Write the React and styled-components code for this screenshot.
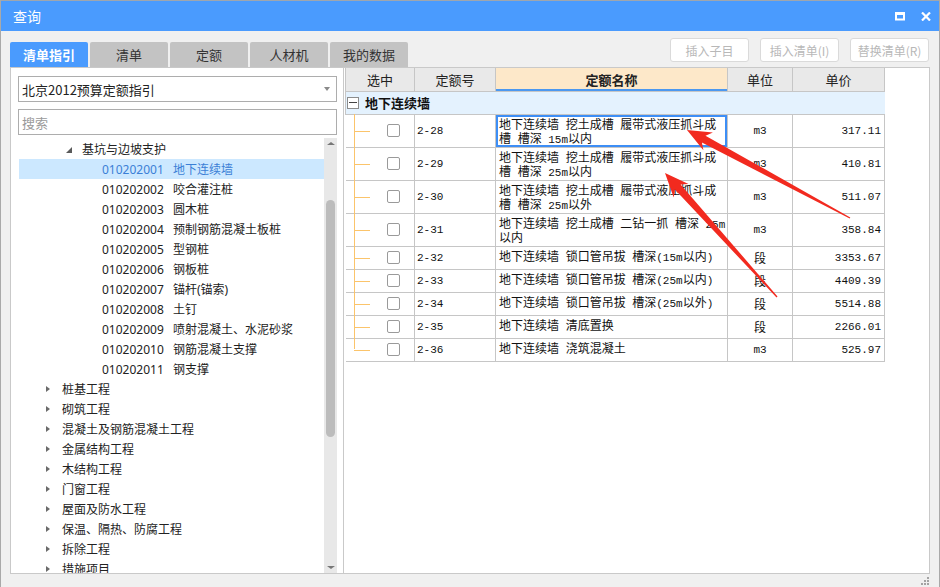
import React from "react";
import styled, { createGlobalStyle } from "styled-components";

const GlobalStyle = createGlobalStyle`
  html, body {
    margin: 0;
    padding: 0;
    background: #f0f0f0;
  }
  body {
    font-family: "Noto Sans", "Noto Sans CJK SC", sans-serif;
    font-size: 12px;
    color: #222;
  }
  * {
    box-sizing: border-box;
  }
`;

const Window = styled.div`
  position: relative;
  width: 940px;
  height: 587px;
  display: flex;
  flex-direction: column;
  background: #f0f0f0;
  border-left: 1px solid #a9a9a9;
  border-right: 1px solid #a9a9a9;
  overflow: hidden;
`;

const TitleBar = styled.div`
  height: 32px;
  display: flex;
  align-items: center;
  justify-content: space-between;
  background: #4a9bfe;
  border-top: 1px solid #9fa6ae;
  padding: 0 8px 0 12px;
`;

const Title = styled.div`
  color: #fff;
  font-size: 14px;
  font-family: "Noto Sans CJK SC", sans-serif;
`;

const WinButtons = styled.div`
  display: flex;
  align-items: center;
  gap: 16px;
  padding-top: 1px;
`;

const Body = styled.div`
  flex: 1;
  display: flex;
  flex-direction: column;
  padding: 0 9px 0 9px;
`;

const Toolbar = styled.div`
  height: 36px;
  display: flex;
  justify-content: space-between;
`;

const Tabs = styled.div`
  display: flex;
  align-items: flex-end;
  gap: 2px;
`;

const Tab = styled.div`
  width: 78px;
  height: 25px;
  display: flex;
  align-items: center;
  justify-content: center;
  border-radius: 2px 2px 0 0;
  font-family: "Noto Sans CJK SC", sans-serif;
  font-size: 13px;
  font-weight: ${(p) => (p.$active ? 700 : 400)};
  background: ${(p) => (p.$active ? "#4a9bfe" : "#c3c3c3")};
  color: ${(p) => (p.$active ? "#fff" : "#333")};
`;

const Actions = styled.div`
  display: flex;
  gap: 11px;
  padding-top: 7px;
  padding-right: 1px;
`;

const ActionButton = styled.div`
  width: 79px;
  height: 24px;
  display: flex;
  align-items: center;
  justify-content: center;
  background: #fff;
  border: 1px solid #dadada;
  border-radius: 3px;
  color: #b8b8b8;
  font-family: "Noto Sans CJK SC", sans-serif;
  font-size: 12px;
`;

const Panes = styled.div`
  height: 507px;
  display: flex;
`;

const LeftPane = styled.div`
  width: 334px;
  display: flex;
  flex-direction: column;
  background: #fff;
  border: 1px solid #c9c9c9;
  padding: 8px 6px 0 7px;
`;

const Field = styled.div`
  height: 26px;
  display: flex;
  align-items: center;
  justify-content: space-between;
  border: 1px solid #adadad;
  padding: 0 6px 0 3px;
  font-family: "Noto Sans CJK SC", sans-serif;
  font-size: 13px;
  color: ${(p) => (p.$placeholder ? "#9a9a9a" : "#222")};
  margin-top: ${(p) => (p.$gap ? "7px" : "0")};
`;

const Caret = styled.span`
  width: 0;
  height: 0;
  border-left: 3.5px solid transparent;
  border-right: 3.5px solid transparent;
  border-top: 4px solid #8a8a8a;
`;

const TreeArea = styled.div`
  flex: 1;
  display: flex;
  margin-top: 3px;
  margin-left: 1px;
  min-height: 0;
`;

const TreeList = styled.div`
  flex: 1;
  overflow: hidden;
  padding-top: 1px;
`;

const TreeRow = styled.div`
  height: 20px;
  display: flex;
  align-items: center;
  padding-left: ${(p) => p.$indent}px;
  background: ${(p) => (p.$selected ? "#cce8ff" : "transparent")};
  color: ${(p) => (p.$selected ? "#3b7fd6" : "#222")};
  font-size: 12px;
  white-space: nowrap;
`;

const Toggle = styled.span`
  width: 16px;
  display: flex;
  align-items: center;
`;

const Expanded = styled.span`
  width: 0;
  height: 0;
  border-left: 6px solid transparent;
  border-bottom: 6px solid #5a5a5a;
  margin-top: 1px;
`;

const Collapsed = styled.span`
  width: 0;
  height: 0;
  border-top: 3.5px solid transparent;
  border-bottom: 3.5px solid transparent;
  border-left: 4px solid #6a6a6a;
`;

const Code = styled.span`
  display: inline-block;
  width: 71px;
`;

const ScrollBar = styled.div`
  width: 13px;
  display: flex;
  flex-direction: column;
  align-items: center;
  background: #e8e8e8;
  padding: 2px 0;
`;

const ScrollArrow = styled.span`
  width: 0;
  height: 0;
  border-left: 4px solid transparent;
  border-right: 4px solid transparent;
  ${(p) =>
    p.$down
      ? "border-top: 3px solid #777; margin-top: auto; margin-bottom: 2px;"
      : "border-bottom: 3px solid #777; margin-top: 2px;"}
`;

const Thumb = styled.div`
  width: 9px;
  height: 237px;
  margin-top: 55px;
  border-radius: 5px;
  background: #bcbcbc;
`;

const RightPane = styled.div`
  flex: 1;
  background: #fff;
  border: 1px solid #c9c9c9;
  border-left: none;
  padding-left: 1px;
`;

const Table = styled.table`
  width: 539px;
  border-collapse: collapse;
  table-layout: fixed;
  font-family: "Liberation Mono", "Noto Sans CJK SC", monospace;
  font-size: 12px;
  color: #111;
`;

const Th = styled.th`
  height: 23px;
  padding: 0;
  border: 1px solid #c6c6c6;
  border-top: none;
  font-family: "Noto Sans CJK SC", sans-serif;
  font-size: 13px;
  font-weight: ${(p) => (p.$active ? 700 : 400)};
  color: #222;
  background: ${(p) => (p.$active ? "#fde8c9" : "#e9e9e9")};
  box-shadow: ${(p) => (p.$active ? "inset 0 -2px 0 #4b98f0" : "none")};
`;

const GroupCell = styled.td`
  height: 23px;
  padding: 0 0 0 1px;
  background: #e4f2fe;
  border: 1px solid #c6c6c6;
  border-right: none;
`;

const GroupLabel = styled.div`
  display: flex;
  align-items: center;
  gap: 6px;
  font-family: "Noto Sans CJK SC", sans-serif;
  font-size: 13px;
  font-weight: 700;
`;

const MinusBox = styled.span`
  width: 12px;
  height: 12px;
  border: 1px solid #8c8c8c;
  background: #fff;
  display: flex;
  align-items: center;
  justify-content: center;
  &::before {
    content: "";
    width: 8px;
    height: 1px;
    background: #444;
  }
`;

const Tr = styled.tr`
  height: ${(p) => (p.$tall ? 33 : 23)}px;
`;

const Td = styled.td`
  padding: 0 ${(p) => (p.$align === "right" ? "3px" : "2px")} 0 2px;
  border: 1px solid #c6c6c6;
  text-align: ${(p) => p.$align || "left"};
  vertical-align: middle;
  white-space: nowrap;
  font-size: ${(p) => (p.$cjk ? "12px" : "11px")};
`;

const SelectCell = styled.td`
  position: relative;
  padding: 0 0 0 41px;
  border: 1px solid #c6c6c6;
  border-left: none;

  &::before {
    content: "";
    position: absolute;
    left: 8px;
    top: -1px;
    width: 1px;
    height: ${(p) => (p.$last ? "50%" : "calc(100% + 1px)")};
    background: #fbc46b;
  }
  &::after {
    content: "";
    position: absolute;
    left: 8px;
    top: 50%;
    width: 16px;
    height: 1px;
    background: #fbc46b;
  }
`;

const CheckBox = styled.span`
  display: block;
  width: 13px;
  height: 13px;
  border: 1px solid #9a9a9a;
  border-radius: 2px;
  background: #fff;
`;

const NameCell = styled.td`
  padding: ${(p) => (p.$tall ? "4px" : "1px")} 0 0 3px;
  border: 1px solid #c6c6c6;
  overflow: hidden;
  line-height: 14px;
  vertical-align: ${(p) => (p.$tall ? "top" : "middle")};
  box-shadow: ${(p) => (p.$selected ? "inset 0 0 0 2px #3d8ef5" : "none")};
`;

const NameLine = styled.div`
  white-space: pre;
`;

const Latin = styled.span`
  font-size: 11px;
`;

const Footer = styled.div`
  flex: 1;
  display: flex;
  justify-content: flex-end;
  align-items: flex-start;
  padding-top: 3px;
`;

const Overlay = styled.svg`
  position: absolute;
  left: 0;
  top: 0;
  pointer-events: none;
`;

const tabs = ["清单指引", "清单", "定额", "人材机", "我的数据"];
const actions = ["插入子目", "插入清单(I)", "替换清单(R)"];

const subItems = [
  ["010202001", "地下连续墙"],
  ["010202002", "咬合灌注桩"],
  ["010202003", "圆木桩"],
  ["010202004", "预制钢筋混凝土板桩"],
  ["010202005", "型钢桩"],
  ["010202006", "钢板桩"],
  ["010202007", "锚杆(锚索)"],
  ["010202008", "土钉"],
  ["010202009", "喷射混凝土、水泥砂浆"],
  ["010202010", "钢筋混凝土支撑"],
  ["010202011", "钢支撑"],
];

const chapters = [
  "桩基工程",
  "砌筑工程",
  "混凝土及钢筋混凝土工程",
  "金属结构工程",
  "木结构工程",
  "门窗工程",
  "屋面及防水工程",
  "保温、隔热、防腐工程",
  "拆除工程",
  "措施项目",
];

const rows = [
  { code: "2-28", name: ["地下连续墙 挖土成槽 履带式液压抓斗成", "槽 槽深 15m以内"], unit: "m3", price: "317.11", selected: true },
  { code: "2-29", name: ["地下连续墙 挖土成槽 履带式液压抓斗成", "槽 槽深 25m以内"], unit: "m3", price: "410.81" },
  { code: "2-30", name: ["地下连续墙 挖土成槽 履带式液压抓斗成", "槽 槽深 25m以外"], unit: "m3", price: "511.07" },
  { code: "2-31", name: ["地下连续墙 挖土成槽 二钻一抓 槽深 25m", "以内"], unit: "m3", price: "358.84" },
  { code: "2-32", name: ["地下连续墙 锁口管吊拔 槽深(15m以内)"], unit: "段", price: "3353.67" },
  { code: "2-33", name: ["地下连续墙 锁口管吊拔 槽深(25m以内)"], unit: "段", price: "4409.39" },
  { code: "2-34", name: ["地下连续墙 锁口管吊拔 槽深(25m以外)"], unit: "段", price: "5514.88" },
  { code: "2-35", name: ["地下连续墙 清底置换"], unit: "段", price: "2266.01" },
  { code: "2-36", name: ["地下连续墙 浇筑混凝土"], unit: "m3", price: "525.97" },
];

// ascii runs are set a bit smaller, like the half-width glyphs of the original
const renderLine = (text) =>
  text.split(/([ -~]+)/).map((part, i) =>
    /^[ -~]+$/.test(part) ? <Latin key={i}>{part}</Latin> : part
  );

// tapered screenshot-style arrow, from tail to tip
const arrowPoints = (x1, y1, x2, y2) => {
  const len = Math.hypot(x2 - x1, y2 - y1);
  const ux = (x2 - x1) / len;
  const uy = (y2 - y1) / len;
  const nx = -uy;
  const ny = ux;
  const neck = [x2 - ux * 19, y2 - uy * 19];
  const wing = [x2 - ux * 24, y2 - uy * 24];
  const pt = (p, w) => `${(p[0] + nx * w).toFixed(1)},${(p[1] + ny * w).toFixed(1)}`;
  return [
    pt([x1, y1], 0.7),
    pt(neck, 3.8),
    pt(wing, 10),
    pt([x2, y2], 0),
    pt(wing, -10),
    pt(neck, -3.8),
    pt([x1, y1], -0.7),
  ].join(" ");
};

const App = () => (
  <>
    <GlobalStyle />
    <Window>
      <TitleBar>
        <Title>查询</Title>
        <WinButtons>
          <svg width="10" height="9" viewBox="0 0 10 9">
            <rect x="1" y="1.5" width="8" height="6" fill="none" stroke="#fff" strokeWidth="2" />
            <rect x="0" y="0" width="10" height="3" fill="#fff" />
          </svg>
          <svg width="10" height="9" viewBox="0 0 10 9">
            <path d="M1 0.5 L9 8.5 M9 0.5 L1 8.5" stroke="#fff" strokeWidth="2.2" />
          </svg>
        </WinButtons>
      </TitleBar>

      <Body>
        <Toolbar>
          <Tabs>
            {tabs.map((t, i) => (
              <Tab key={t} $active={i === 0}>
                {t}
              </Tab>
            ))}
          </Tabs>
          <Actions>
            {actions.map((a) => (
              <ActionButton key={a}>{a}</ActionButton>
            ))}
          </Actions>
        </Toolbar>

        <Panes>
          <LeftPane>
            <Field>
              北京2012预算定额指引
              <Caret />
            </Field>
            <Field $gap $placeholder>
              搜索
            </Field>
            <TreeArea>
              <TreeList>
                <TreeRow $indent={47}>
                  <Toggle>
                    <Expanded />
                  </Toggle>
                  基坑与边坡支护
                </TreeRow>
                {subItems.map(([code, name], i) => (
                  <TreeRow key={code} $indent={83} $selected={i === 0}>
                    <Code>{code}</Code>
                    {name}
                  </TreeRow>
                ))}
                {chapters.map((c) => (
                  <TreeRow key={c} $indent={27}>
                    <Toggle>
                      <Collapsed />
                    </Toggle>
                    {c}
                  </TreeRow>
                ))}
              </TreeList>
              <ScrollBar>
                <ScrollArrow />
                <Thumb />
                <ScrollArrow $down />
              </ScrollBar>
            </TreeArea>
          </LeftPane>

          <RightPane>
            <Table>
              <colgroup>
                <col style={{ width: 69 }} />
                <col style={{ width: 81 }} />
                <col style={{ width: 232 }} />
                <col style={{ width: 65 }} />
                <col style={{ width: 92 }} />
              </colgroup>
              <thead>
                <tr>
                  <Th>选中</Th>
                  <Th>定额号</Th>
                  <Th $active>定额名称</Th>
                  <Th>单位</Th>
                  <Th>单价</Th>
                </tr>
              </thead>
              <tbody>
                <tr>
                  <GroupCell colSpan={5}>
                    <GroupLabel>
                      <MinusBox />
                      地下连续墙
                    </GroupLabel>
                  </GroupCell>
                </tr>
                {rows.map((r, i) => {
                  const tall = r.name.length > 1;
                  return (
                    <Tr key={r.code} $tall={tall}>
                      <SelectCell $last={i === rows.length - 1}>
                        <CheckBox />
                      </SelectCell>
                      <Td>{r.code}</Td>
                      <NameCell $tall={tall} $selected={r.selected}>
                        {r.name.map((line) => (
                          <NameLine key={line}>{renderLine(line)}</NameLine>
                        ))}
                      </NameCell>
                      <Td $align="center" $cjk={r.unit === "段"}>
                        {r.unit}
                      </Td>
                      <Td $align="right">{r.price}</Td>
                    </Tr>
                  );
                })}
              </tbody>
            </Table>
          </RightPane>
        </Panes>

        <Footer>
          <svg width="10" height="10" viewBox="0 0 10 10">
            <g fill="#a3a3a3">
              <rect x="7" y="0" width="2" height="2" />
              <rect x="4" y="3" width="2" height="2" />
              <rect x="7" y="3" width="2" height="2" />
              <rect x="1" y="6" width="2" height="2" />
              <rect x="4" y="6" width="2" height="2" />
              <rect x="7" y="6" width="2" height="2" />
            </g>
          </svg>
        </Footer>
      </Body>

      <Overlay width="940" height="587">
        <polygon points={arrowPoints(849, 218, 686, 130)} fill="#f22a1f" />
        <polygon points={arrowPoints(776, 297, 664, 173)} fill="#f22a1f" />
      </Overlay>
    </Window>
  </>
);

export default App;
